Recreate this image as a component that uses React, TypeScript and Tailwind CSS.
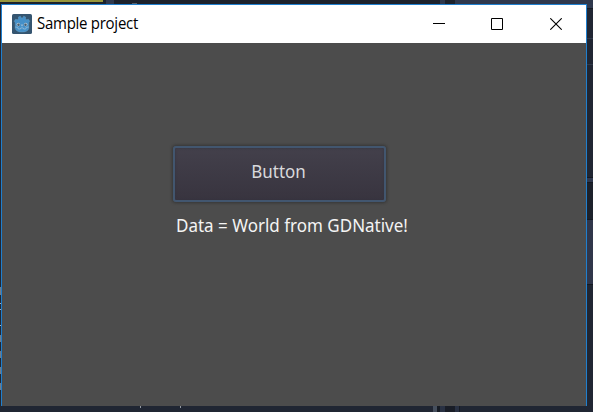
import type { ReactNode } from "react";

function GodotIcon() {
  return (
    <svg className="block h-5 w-5 shrink-0" viewBox="0 0 20 20">
      <rect width="20" height="20" rx="1.6" fill="#355570" />
      <path
        d="M2.2 7.2 L3.6 5.2 L5.2 5.8 L6.6 5 L6.4 3 L8.4 2.2 L9.3 3.9 H10.7 L11.6 2.2 L13.6 3 L13.4 5 L14.8 5.8 L16.4 5.2 L17.8 7.2 L16.8 8.7 V14.4 C16 17 13.4 18 10 18 C6.6 18 4 17 3.2 14.4 V8.7 Z"
        fill="#4590c8"
        stroke="#6fa6cb"
        strokeWidth=".4"
      />
      <path d="M3.2 13 L5.8 13.4 L6.2 15 H8.4 L8.8 13.9 H11.2 L11.6 15 H13.8 L14.2 13.4 L16.8 13" fill="none" stroke="#9fc3dc" strokeWidth=".7" />
      <circle cx="6.3" cy="10.6" r="1.8" fill="#b9cbd8" />
      <circle cx="13.7" cy="10.6" r="1.8" fill="#b9cbd8" />
      <circle cx="6.5" cy="10.7" r="1.2" fill="#455b6d" />
      <circle cx="13.5" cy="10.7" r="1.2" fill="#455b6d" />
      <path d="M10 10.4v1.8" stroke="#c3d5e1" strokeWidth="1" />
    </svg>
  );
}

function Control({ children }: { children: ReactNode }) {
  return (
    <div className="flex h-[38px] w-[58px] items-center justify-center">
      <svg className="block h-3 w-3" viewBox="0 0 12 12" fill="none" stroke="#000" strokeWidth="1">
        {children}
      </svg>
    </div>
  );
}

function TitleBar() {
  return (
    <header className="flex h-[38px] shrink-0 items-center bg-white pl-[10px] font-['Open_Sans','Noto_Sans',sans-serif]">
      <GodotIcon />
      <span className="ml-[5px] origin-left scale-y-[1.04] whitespace-nowrap pb-0.5 text-[15px] leading-5 tracking-[-0.27px] text-black">
        Sample project
      </span>
      <div className="ml-auto mr-px flex">
        <Control>
          <path d="M0 5.5h12" />
        </Control>
        <Control>
          <path d="M.5 .5h11v11H.5z" />
        </Control>
        <div className="ml-px">
          <Control>
            <path d="M.3 .3l11.4 11.4M11.7 .3L.3 11.7" strokeWidth="1.1" />
          </Control>
        </div>
      </div>
    </header>
  );
}

function TopStrip() {
  return (
    <div className="flex h-1 shrink-0 bg-[#1d222c]">
      <div className="h-0.5 w-[103px] bg-[#99973b]" />
      <div className="ml-[3px] h-full w-2 bg-[#30394e]" />
      <div className="ml-[18px] mt-[3px] h-px w-[5px] bg-[#59606b]" />
      <div className="ml-[303px] h-full w-[5px] bg-[#2f384c]" />
      <div className="ml-[10px] h-full flex-1 bg-[#2f384c]" />
    </div>
  );
}

function LeftStrip() {
  return (
    <div className="flex w-px shrink-0 flex-col bg-[#202633]">
      <div className="mt-[283px] h-2 bg-[#747b86]" />
      <div className="mt-2 h-px bg-[#aab0b8]" />
      <div className="mt-[5px] h-px bg-[#aab0b8]" />
      <div className="mt-[15px] h-px bg-[#aab0b8]" />
      <div className="mt-[9px] h-[7px] bg-[#747b86]" />
      <div className="mt-[9px] h-[7px] bg-[#747b86]" />
      <div className="mt-[9px] h-[7px] bg-[#747b86]" />
      <div className="mt-[9px] h-[7px] bg-[#747b86]" />
    </div>
  );
}

function RightStrip() {
  return (
    <div className="flex w-[6px] shrink-0 flex-col bg-[#202633]">
      <div className="h-1 bg-[#30394e]" />
      <div className="h-px bg-[#171b24]" />
      <div className="mt-[29px] h-px bg-[#30394a]" />
      <div className="mt-[25px] h-px bg-[#30394a]" />
      <div className="mt-[112px] h-px bg-[#151922]" />
      <div className="h-1 bg-[#30394e]" />
      <div className="h-px bg-[#151922]" />
      <div className="h-9 bg-[#1c212b]" />
      <div className="h-px bg-[#151922]" />
      <div className="h-16 bg-[#30364a]" />
      <div className="h-px bg-[#151922]" />
    </div>
  );
}

function BottomStrip() {
  return (
    <div className="flex h-[6px] shrink-0 bg-[#202633]">
      <div className="ml-[140px] h-0.5 w-px bg-[#9299a2]" />
      <div className="ml-[39px] h-0.5 w-px bg-[#9299a2]" />
      <div className="ml-[252px] w-1 bg-[#464f5d]" />
      <div className="w-[3px] bg-[#171c25]" />
      <div className="w-[5px] bg-[#293143]" />
      <div className="w-[10px] bg-[#191d27]" />
      <div className="w-1 bg-[#293143]" />
      <div className="w-px bg-[#171b24]" />
    </div>
  );
}

export default function App() {
  return (
    <div className="flex h-[412px] w-[593px] flex-col overflow-hidden bg-[#202633] font-['Noto_Sans','Open_Sans',sans-serif]">
      <TopStrip />
      <div className="flex h-[402px] shrink-0">
        <LeftStrip />
        <main className="flex w-[586px] shrink-0 flex-col border-x border-t border-[#1f7fce] bg-[#4c4c4c]">
          <TitleBar />
          <div className="flex flex-col items-start pl-[171px] pt-[103px]">
            <button className="flex h-14 w-[213px] items-center justify-center rounded-[3px] border-2 border-[#42566f] bg-linear-to-b from-[#43404b] to-[#38343f] pb-1 pr-0.5 text-[17px] leading-6 text-[#d9d9dc] shadow-[0_0_3px_1px_rgba(20,20,20,0.4),inset_0_0_3px_#353440]">
              <span className="scale-y-[1.07]">Button</span>
            </button>
            <p className="ml-[3px] mt-3 origin-center scale-y-[1.07] whitespace-nowrap text-[17px] leading-6 text-[#f4f4f4]">
              Data = World from GDNative!
            </p>
          </div>
        </main>
        <RightStrip />
      </div>
      <BottomStrip />
    </div>
  );
}
